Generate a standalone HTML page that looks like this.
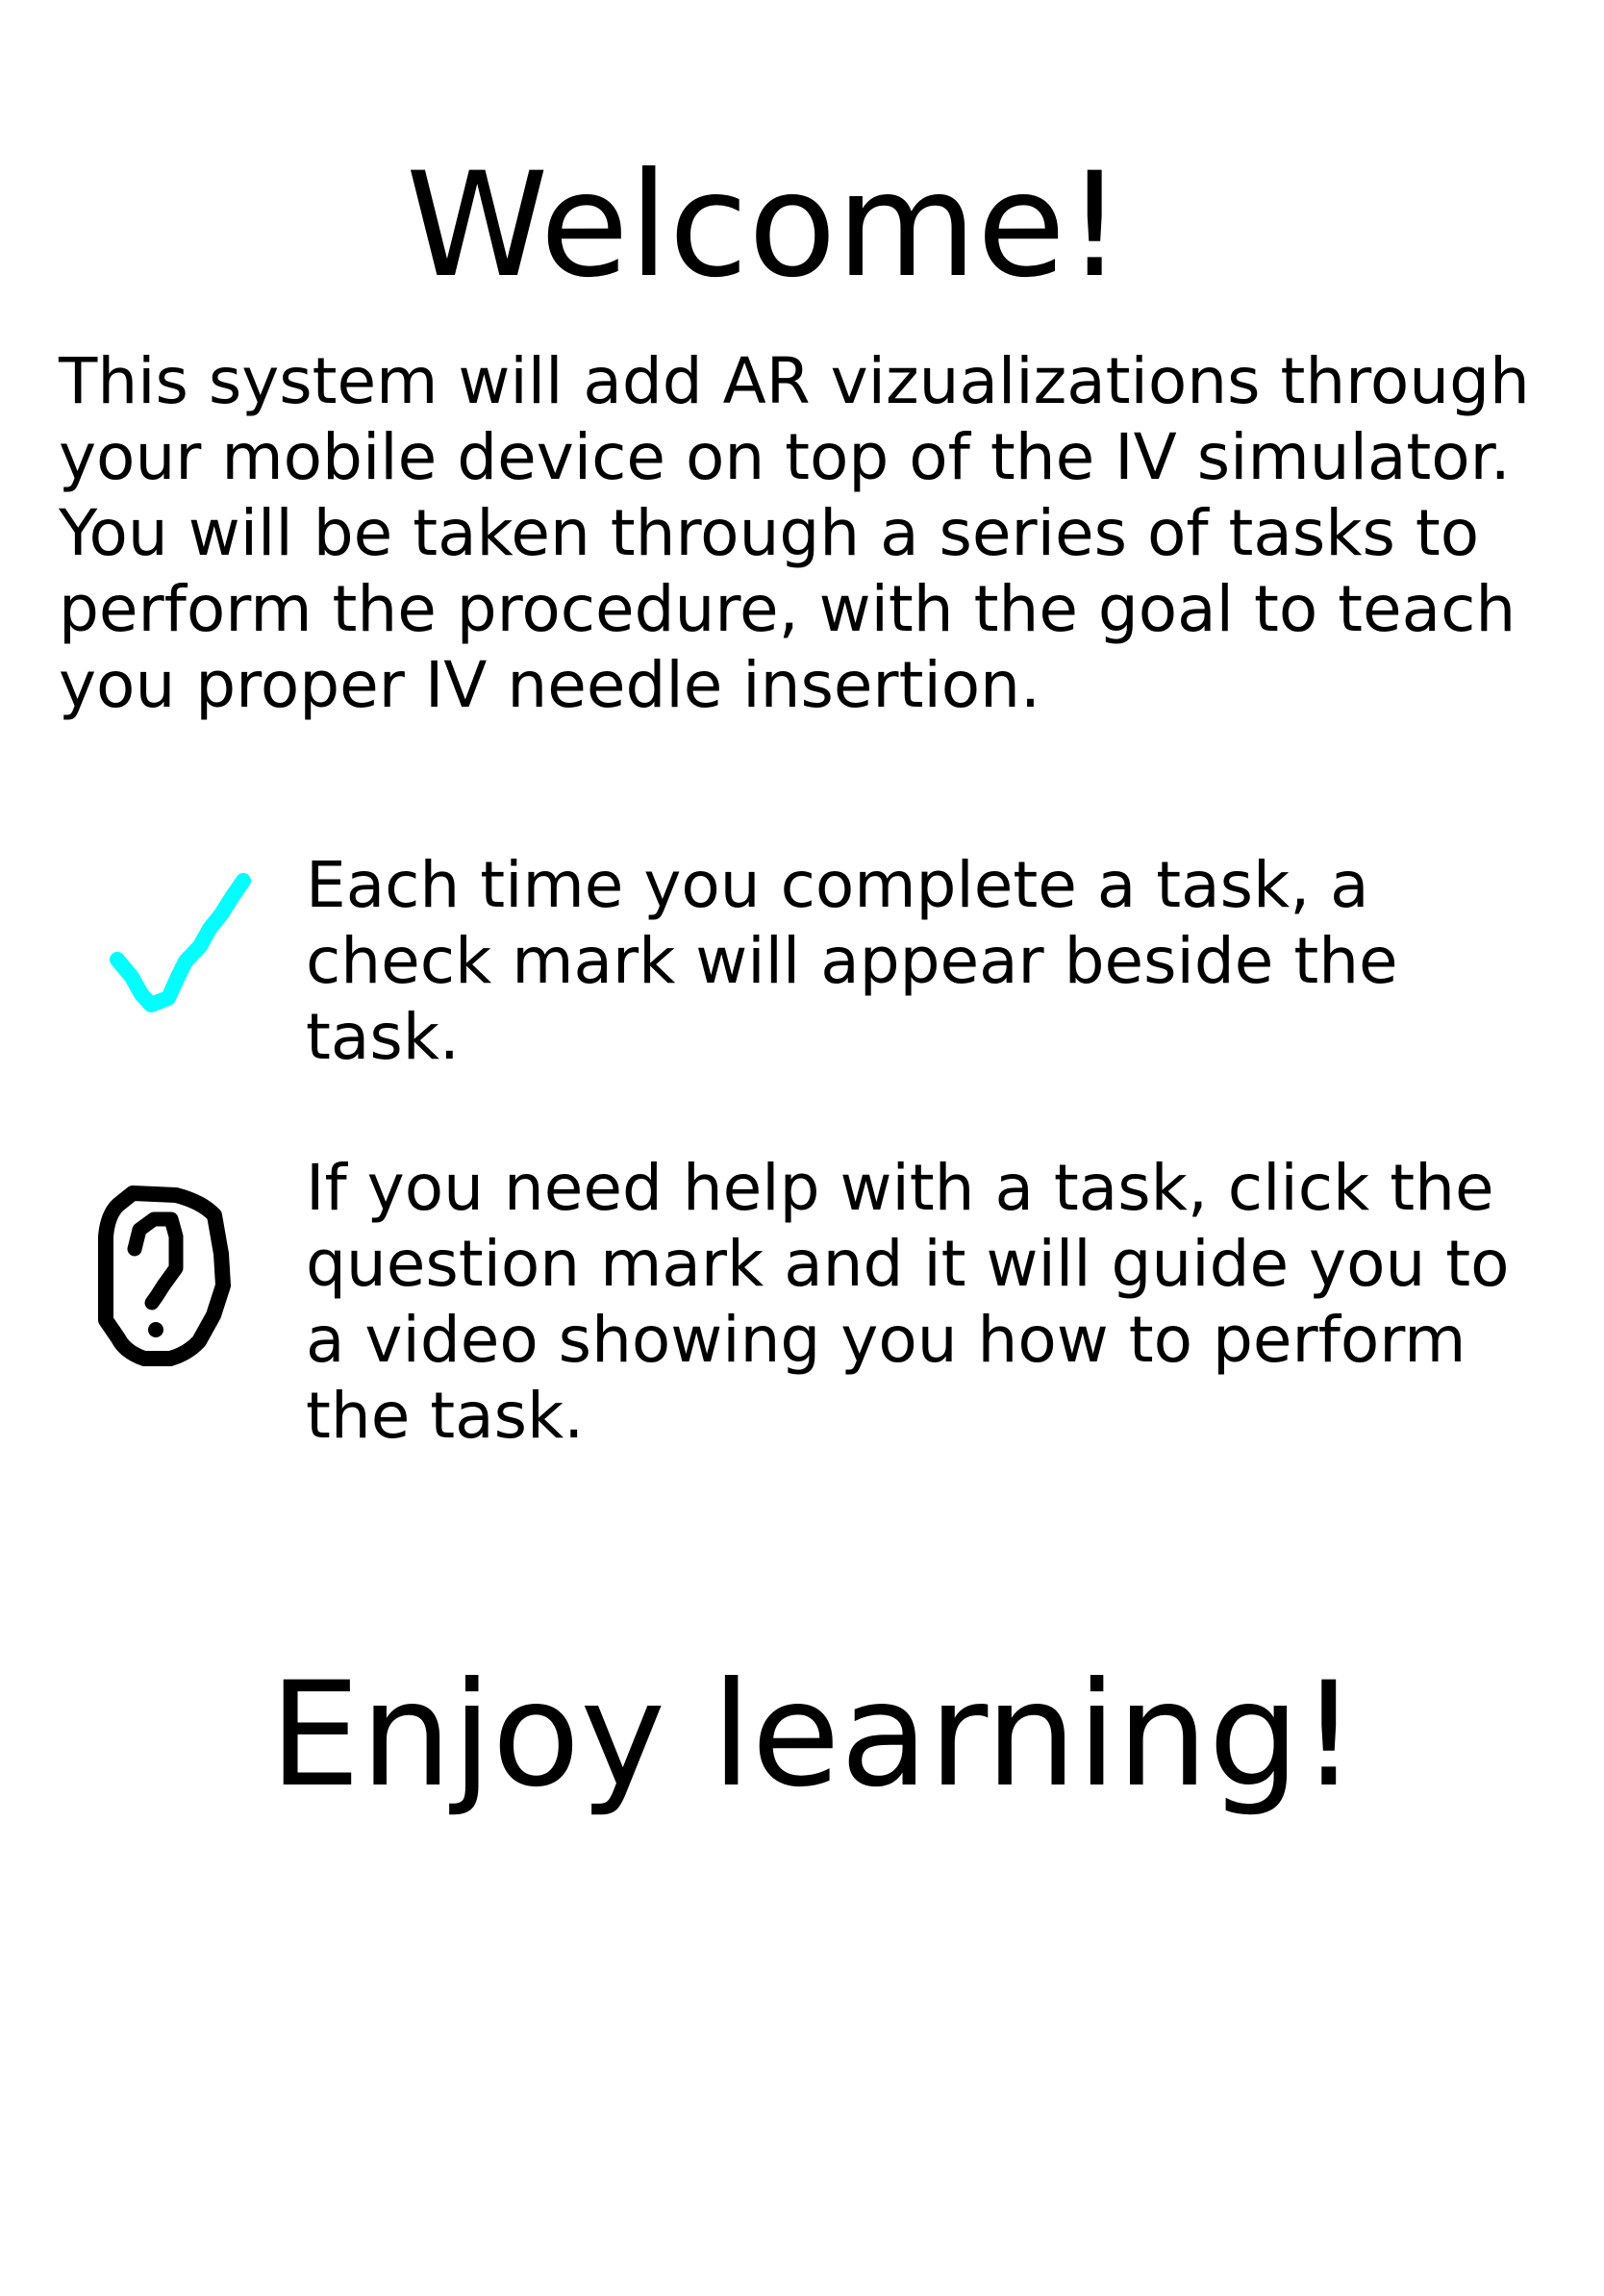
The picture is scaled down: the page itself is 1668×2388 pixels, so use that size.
<!DOCTYPE html>
<html><head><meta charset="utf-8"><style>
html,body{margin:0;padding:0;background:#fff;}
body{width:1668px;height:2388px;position:relative;overflow:hidden;font-family:"DejaVu Sans","Liberation Sans",sans-serif;color:#000;}
.t{position:absolute;white-space:nowrap;line-height:79px;font-size:66px;}
.big{position:absolute;white-space:nowrap;font-size:150px;line-height:150px;}
</style></head><body>
<div class="big" style="left:422px;top:160px;">Welcome!</div>
<div class="t" style="left:61px;top:357px;">This system will add AR vizualizations through<br>your mobile device on top of the IV simulator.<br>You will be taken through a series of tasks to<br>perform the procedure, with the goal to teach<br>you proper IV needle insertion.</div>
<div class="t" style="left:318px;top:881px;">Each time you complete a task, a<br>check mark will appear beside the<br>task.</div>
<div class="t" style="left:318px;top:1196px;">If you need help with a task, click the<br>question mark and it will guide you to<br>a video showing you how to perform<br>the task.</div>
<div class="big" style="left:280px;top:1730px;">Enjoy learning!</div>
<svg style="position:absolute;left:0;top:0" width="1668" height="2388">
<polyline points="122,998 137,1016 147,1034 157,1045 175,1038 185,1016 193,1000 208,984 218,966 230,951 242,932 253,916" fill="none" stroke="#00ffff" stroke-width="16" stroke-linecap="round" stroke-linejoin="round"/>
<g transform="translate(0,8)">
<path d="M138,1233 L183,1235 Q210,1242 223,1256 L230,1296 L232,1329 L222,1360 L207,1387 Q195,1400 177,1405 L150,1405 Q130,1398 123,1384 L110,1365 L110,1278 Q112,1255 123,1245 Z" fill="none" stroke="#000" stroke-width="16" stroke-linejoin="round"/>
<polyline points="140,1291 145,1271 160,1260 178,1260 183,1278 183,1311 170,1329 163,1340 158,1347" fill="none" stroke="#000" stroke-width="15" stroke-linecap="round" stroke-linejoin="round"/>
<circle cx="162" cy="1375" r="8" fill="#000"/>
</g>
</svg>
</body></html>
